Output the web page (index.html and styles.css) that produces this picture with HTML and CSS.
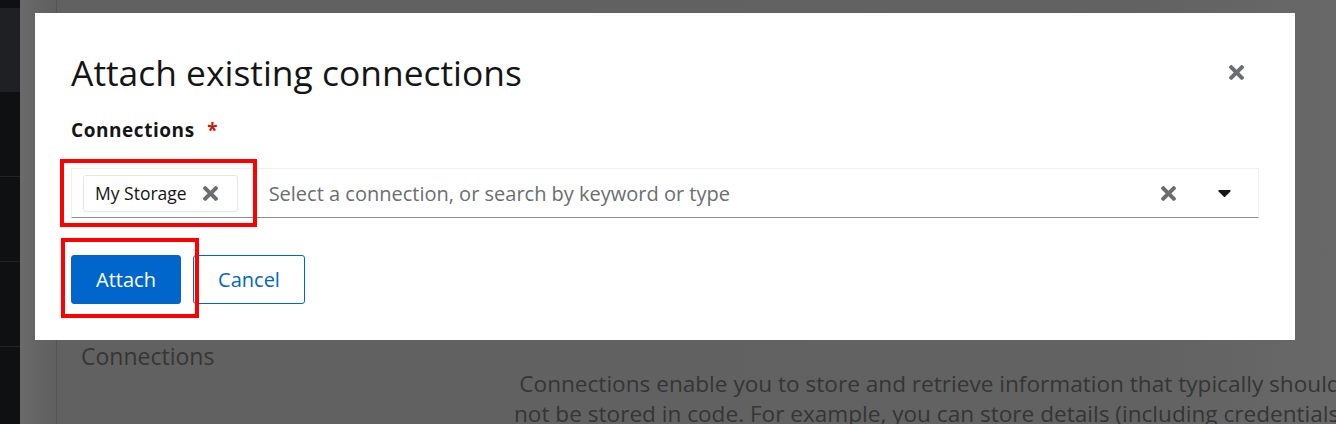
FILE: index.html
```html
<!DOCTYPE html>
<html lang="en">
<head>
<meta charset="utf-8">
<title>Attach existing connections</title>
<link rel="stylesheet" href="styles.css">
</head>
<body>
<div class="page">
  <nav class="nav">
    <div class="nav-top"></div>
    <div class="nav-brand"></div>
    <div class="nav-item"></div>
    <div class="nav-item"></div>
    <div class="nav-item"></div>
    <div class="nav-item last"></div>
  </nav>
  <aside class="side"></aside>
  <main class="main">
    <div class="main-left">
      <h2 class="section-title">Connections</h2>
    </div>
    <div class="main-right">
      <p class="empty-text">Connections enable you to store and retrieve information that typically should<br>not be stored in code. For example, you can store details (including credentials)</p>
    </div>
  </main>
</div>

<div class="backdrop">
  <div class="modal" role="dialog">
    <header class="modal-header">
      <h1 class="modal-title">Attach existing connections</h1>
      <button class="icon-btn close-btn" aria-label="Close">
        <svg class="times" viewBox="0 80 352 352"><path d="M242.72 256l100.07-100.07c12.28-12.28 12.28-32.19 0-44.48l-22.24-22.240c-12.28-12.28-32.19-12.28-44.48 0L176 189.28 75.930 89.21c-12.28-12.28-32.19-12.28-44.48 0L9.21 111.45c-12.28 12.28-12.28 32.19 0 44.48L109.28 256 9.21 356.07c-12.28 12.28-12.28 32.19 0 44.48l22.24 22.24c12.28 12.28 32.2 12.28 44.48 0L176 322.72l100.07 100.07c12.28 12.28 32.2 12.28 44.48 0l22.24-22.24c12.28-12.28 12.28-32.19 0-44.48L242.72 256z"/></svg>
      </button>
    </header>

    <div class="field">
      <label class="field-label">Connections <span class="req">*</span></label>
      <div class="select">
        <div class="chip">
          <span class="chip-text">My Storage</span>
          <svg class="times chip-x" viewBox="0 80 352 352"><path d="M242.72 256l100.07-100.07c12.28-12.28 12.28-32.19 0-44.48l-22.24-22.240c-12.28-12.28-32.19-12.28-44.48 0L176 189.28 75.930 89.21c-12.28-12.28-32.19-12.28-44.48 0L9.21 111.45c-12.28 12.28-12.28 32.19 0 44.48L109.28 256 9.21 356.07c-12.28 12.28-12.28 32.19 0 44.48l22.24 22.24c12.28 12.28 32.2 12.28 44.48 0L176 322.72l100.07 100.07c12.28 12.28 32.2 12.28 44.48 0l22.24-22.24c12.28-12.28 12.28-32.19 0-44.48L242.72 256z"/></svg>
        </div>
        <span class="placeholder">Select a connection, or search by keyword or type</span>
        <svg class="times clear-x" viewBox="0 80 352 352"><path d="M242.72 256l100.07-100.07c12.28-12.28 12.28-32.19 0-44.48l-22.24-22.240c-12.28-12.28-32.19-12.28-44.48 0L176 189.28 75.930 89.21c-12.28-12.28-32.19-12.28-44.48 0L9.21 111.45c-12.28 12.28-12.28 32.19 0 44.48L109.28 256 9.21 356.07c-12.28 12.28-12.28 32.19 0 44.48l22.24 22.24c12.28 12.28 32.2 12.28 44.48 0L176 322.72l100.07 100.07c12.28 12.28 32.2 12.28 44.48 0l22.24-22.24c12.28-12.28 12.28-32.19 0-44.48L242.72 256z"/></svg>
        <svg class="caret" viewBox="4 192 312 168"><path d="M31.3 192h257.3c17.8 0 26.7 21.5 14.1 34.1L174.1 354.8c-7.8 7.8-20.5 7.8-28.3 0L17.2 226.1C4.6 213.5 13.5 192 31.3 192z"/></svg>
      </div>
    </div>

    <div class="actions">
      <button class="btn btn-primary">Attach</button>
      <button class="btn btn-link">Cancel</button>
    </div>

    <div class="highlight hl-chip"></div>
    <div class="highlight hl-attach"></div>
  </div>
</div>
</body>
</html>
```

FILE: styles.css
```css
* { box-sizing: border-box; }
html, body { margin: 0; padding: 0; }
body {
  width: 1336px;
  height: 424px;
  overflow: hidden;
  font-family: "Open Sans", "Noto Sans", sans-serif;
  background: #626262;
}

/* background page (already dimmed by backdrop) */
.page {
  display: grid;
  grid-template-columns: 20px 37px 1fr;
  height: 424px;
}
.nav {
  background: #0f1012;
  display: flex;
  flex-direction: column;
}
.nav-top { height: 8px; background: #0f1012; }
.nav-brand { height: 84px; background: #1f2023; }
.nav-item { height: 85px; border-bottom: 1px solid #222326; }
.nav-item.last { border-bottom: none; flex: 1; }
.side {
  background: linear-gradient(to right, #6a6a6a, #5f5f5f);
  border-right: 1px solid #545454;
}
.main {
  display: flex;
  overflow: hidden;
  background: linear-gradient(to right, #616161 0%, #626262 85%, #686868 100%);
}
.main-left { flex: 0 0 453px; padding: 339px 0 0 24px; }
.section-title {
  margin: 0;
  font-family: "Open Sans", sans-serif;
  font-weight: 400;
  font-size: 23px;
  line-height: 34px;
  color: #363636;
  white-space: nowrap;
}
.main-right { padding-top: 369px; }
.empty-text {
  margin: 0 0 0 -30px;
  width: 900px;
  text-align: center;
  white-space: nowrap;
  font-size: 22.6px;
  line-height: 30px;
  color: #353535;
}

/* modal */
.backdrop {
  position: fixed;
  inset: 0;
  padding: 13px 0 0 35px;
}
.modal {
  position: relative;
  width: 1260px;
  background: #fff;
  padding: 37px 36px 36px;
  color: #151515;
}
.modal-header {
  display: flex;
  align-items: center;
  justify-content: space-between;
}
.modal-title {
  margin: 0;
  font-family: "Open Sans", sans-serif;
  font-weight: 400;
  font-size: 35.4px;
  line-height: 44px;
  color: #151515;
}
.icon-btn {
  border: 0;
  background: none;
  padding: 0;
  display: flex;
  margin-right: 15px;
}
.times { fill: #6a6e73; display: block; }
.close-btn .times { width: 15px; height: 15px; }

.field { margin-top: 24px; }
.field-label {
  display: block;
  font-weight: 700;
  font-size: 19px;
  letter-spacing: 0.55px;
  line-height: 24px;
  color: #151515;
}
.req { color: #c9190b; margin-left: 7px; }

.select {
  margin-top: 26px;
  height: 50px;
  display: flex;
  align-items: center;
  border: 1px solid #f0f0f0;
  border-bottom-color: #8a8d90;
  padding: 0 27px 0 11px;
}
.chip {
  display: flex;
  align-items: center;
  height: 37px;
  border: 1px solid #e6e6e6;
  border-radius: 3px;
  padding: 0 19px 0 11px;
}
.chip-text { font-size: 17.5px; color: #151515; }
.chip-x { width: 15px; height: 15px; margin-left: 16px; }
.placeholder {
  flex: 1;
  margin-left: 31px;
  font-size: 20px;
  color: #6a6e73;
  white-space: nowrap;
}
.clear-x { width: 15px; height: 15px; }
.caret { width: 13px; height: 7px; fill: #151515; margin-left: 42px; }

.actions {
  margin-top: 37px;
  display: flex;
  gap: 12px;
}
.btn {
  height: 49px;
  border-radius: 3px;
  font-family: "Open Sans", sans-serif;
  font-size: 20px;
  padding: 0;
  cursor: pointer;
}
.btn-primary {
  width: 110px;
  background: #0066cc;
  color: #fff;
  border: 1px solid #0066cc;
}
.btn-link {
  width: 112px;
  background: #fff;
  color: #0066cc;
  border: 1px solid #0066cc;
}

/* annotation boxes */
.highlight {
  position: absolute;
  border: 4px solid #ff0000;
}
.hl-chip { left: 25px; top: 146px; width: 197px; height: 68px; }
.hl-attach { left: 26px; top: 225px; width: 138px; height: 80px; }
```
